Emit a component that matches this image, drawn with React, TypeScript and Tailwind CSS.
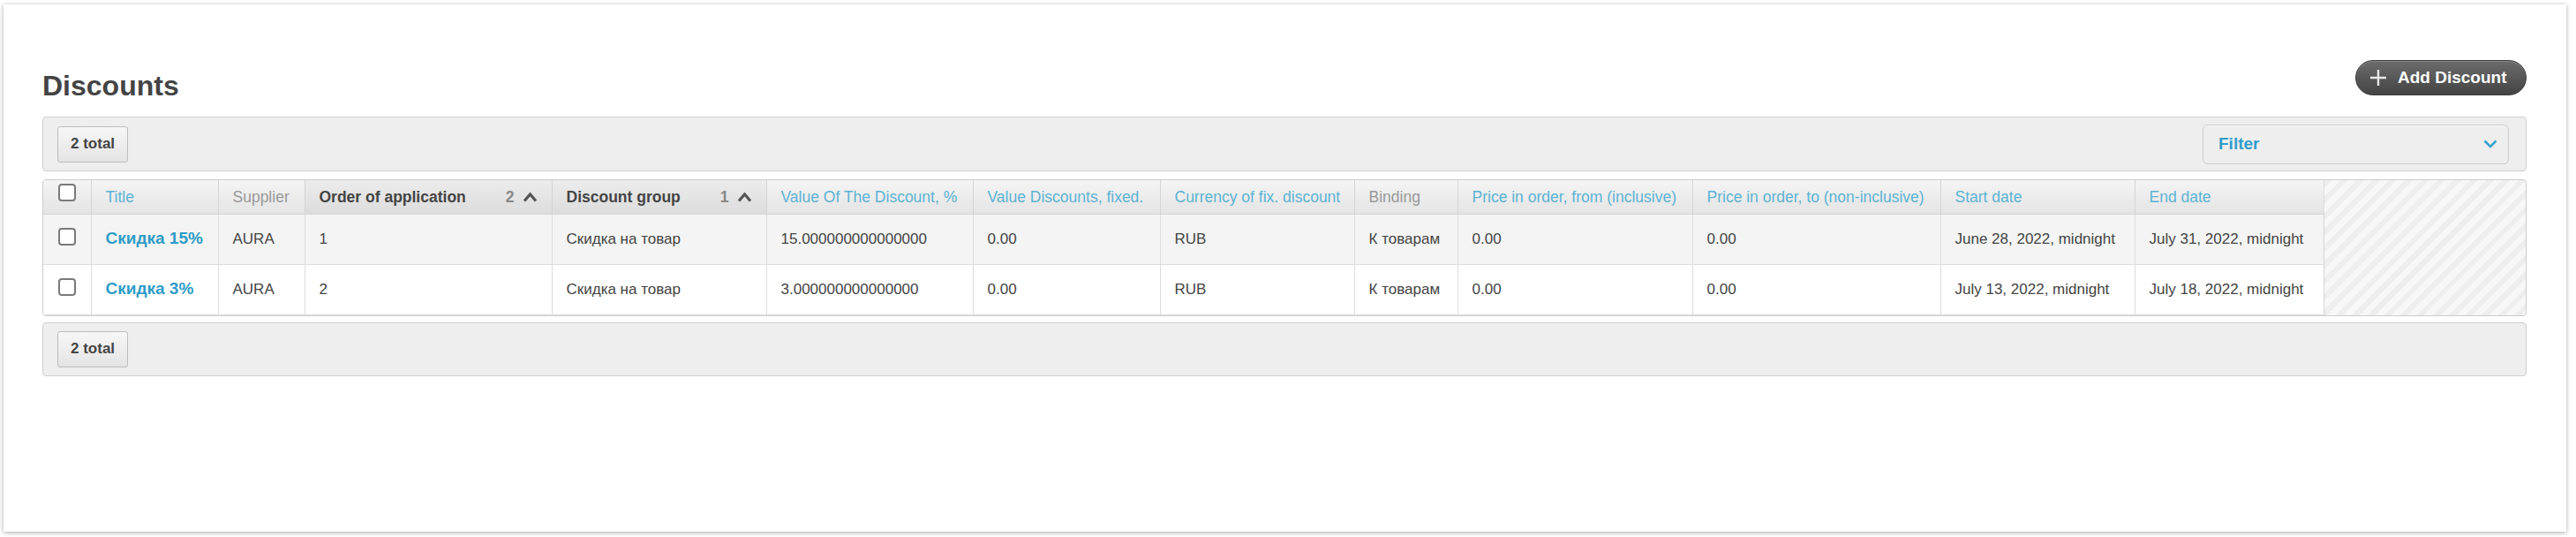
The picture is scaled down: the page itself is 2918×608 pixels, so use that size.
import React from 'react';

type Col = {
  label: string;
  width: string;
  tone: 'link' | 'muted' | 'sorted';
  sort?: string;
};

const columns: Col[] = [
  { label: 'Title', width: 'w-[144px]', tone: 'link' },
  { label: 'Supplier', width: 'w-[98px]', tone: 'muted' },
  { label: 'Order of application', width: 'w-[280px]', tone: 'sorted', sort: '2' },
  { label: 'Discount group', width: 'w-[243px]', tone: 'sorted', sort: '1' },
  { label: 'Value Of The Discount, %', width: 'w-[234px]', tone: 'link' },
  { label: 'Value Discounts, fixed.', width: 'w-[212px]', tone: 'link' },
  { label: 'Currency of fix. discount', width: 'w-[220px]', tone: 'link' },
  { label: 'Binding', width: 'w-[117px]', tone: 'muted' },
  { label: 'Price in order, from (inclusive)', width: 'w-[266px]', tone: 'link' },
  { label: 'Price in order, to (non-inclusive)', width: 'w-[281px]', tone: 'link' },
  { label: 'Start date', width: 'w-[220px]', tone: 'link' },
  { label: 'End date', width: 'w-[214px]', tone: 'link' },
];

const rows = [
  {
    title: 'Скидка 15%',
    cells: ['AURA', '1', 'Скидка на товар', '15.000000000000000', '0.00', 'RUB', 'К товарам', '0.00', '0.00', 'June 28, 2022, midnight', 'July 31, 2022, midnight'],
  },
  {
    title: 'Скидка 3%',
    cells: ['AURA', '2', 'Скидка на товар', '3.000000000000000', '0.00', 'RUB', 'К товарам', '0.00', '0.00', 'July 13, 2022, midnight', 'July 18, 2022, midnight'],
  },
];

const Checkbox = () => (
  <span className="block w-[20px] h-[20px] rounded-[4px] border-2 border-[#7a7a7a] bg-white mx-auto" />
);

const TotalButton = () => (
  <button className="h-[41px] px-[14px] rounded-[3px] border border-[#bdbdbd] bg-gradient-to-b from-[#f7f7f7] to-[#e4e4e4] text-[17px] font-bold text-[#444]">
    2 total
  </button>
);

const SortUp = () => (
  <svg width="17" height="12" viewBox="0 0 17 12" fill="none">
    <path d="M2 10.5 8.5 3 15 10.5" stroke="#555" strokeWidth="3.2" strokeLinejoin="miter" />
  </svg>
);

export default function App() {
  return (
    <div className="w-[2918px] h-[608px] bg-white pl-[4px] pt-[5px] font-['Liberation_Sans',Arial,sans-serif] text-[#444]">
      <div className="w-[2903px] h-[597px] bg-white shadow-[0_1px_5px_rgba(0,0,0,0.35)] pt-[63px] pl-[44px] pr-[45px]">
        <div className="flex items-start justify-between h-[45px]">
          <h1 className="mt-[13px] text-[32px] leading-[32px] font-bold text-[#444]">Discounts</h1>
          <button className="h-[40px] w-[194px] flex items-center pl-[15px] rounded-full border border-[#3a3a3a] bg-gradient-to-b from-[#6c6c6c] to-[#444] text-white text-[19px] font-bold shadow-[inset_0_1px_0_rgba(255,255,255,0.2)]">
            <svg width="20" height="20" viewBox="0 0 20 20" className="mr-[12px]">
              <path d="M10 1v18M1 10h18" stroke="#e8e8e8" strokeWidth="2.4" />
            </svg>
            Add Discount
          </button>
        </div>

        <div className="mt-[19px] h-[62px] rounded-[4px] border border-[#cfcfcf] bg-[#eeeeee] flex items-center justify-between pl-[16px] pr-[19px]">
          <TotalButton />
          <div className="w-[347px] h-[45px] rounded-[6px] border border-[#cccccc] bg-[#eeeeee] shadow-[inset_0_1px_0_#fafafa] flex items-center justify-between pl-[17px] pr-[12px]">
            <span className="text-[19px] font-bold text-[#2f9dc9]">Filter</span>
            <svg width="16" height="10" viewBox="0 0 16 10" fill="none">
              <path d="M1.5 1.5 8 8l6.5-6.5" stroke="#3aa2cc" strokeWidth="2.6" />
            </svg>
          </div>
        </div>

        <div className="mt-[9px] rounded-[4px] border border-[#cccccc] overflow-hidden bg-[repeating-linear-gradient(135deg,#f7f7f7_0px,#f7f7f7_7px,#eeeeee_7px,#eeeeee_13px)]">
          <table className="table-fixed border-collapse text-[17px] w-[2583px]">
            <thead>
              <tr className="h-[38px]">
                <th className="w-[54px] border-b border-r border-[#d4d4d4] bg-gradient-to-b from-[#f4f4f4] to-[#e4e4e4] align-top pt-[4px]">
                  <Checkbox />
                </th>
                {columns.map((c, i) => (
                  <th
                    key={c.label}
                    className={`${c.width} border-b border-[#d4d4d4] ${i === columns.length - 1 ? 'border-r border-r-[#dcdcdc]' : 'border-r'} px-[16px] text-left text-[17.5px] whitespace-nowrap ${
                      c.tone === 'sorted'
                        ? 'bg-gradient-to-b from-[#ececec] to-[#dcdcdc] font-bold text-[#444]'
                        : 'bg-gradient-to-b from-[#f4f4f4] to-[#e4e4e4] font-normal'
                    } ${c.tone === 'link' ? 'text-[#5cb3d4]' : ''} ${c.tone === 'muted' ? 'text-[#999]' : ''}`}
                  >
                    {c.sort ? (
                      <div className="flex items-center justify-between">
                        <span>{c.label}</span>
                        <span className="flex items-center gap-[9px] text-[#888] font-bold">
                          {c.sort}
                          <SortUp />
                        </span>
                      </div>
                    ) : (
                      c.label
                    )}
                  </th>
                ))}
              </tr>
            </thead>
            <tbody>
              {rows.map((r, ri) => (
                <tr key={r.title} className={`h-[57px] ${ri === 0 ? 'bg-[#f4f4f4]' : 'bg-white'}`}>
                  <td className="border-b border-r border-[#dddddd] align-top pt-[15px]">
                    <Checkbox />
                  </td>
                  <td className="border-b border-r border-[#dddddd] px-[16px] whitespace-nowrap font-bold text-[19px] text-[#2e9cc7]">
                    {r.title}
                  </td>
                  {r.cells.map((v, ci) => (
                    <td
                      key={ci}
                      className={`border-b border-r ${ci === r.cells.length - 1 ? 'border-r-[#d4d4d4]' : ''} border-[#dddddd] px-[16px] whitespace-nowrap text-[#444]`}
                    >
                      {v}
                    </td>
                  ))}
                </tr>
              ))}
            </tbody>
          </table>
        </div>

        <div className="mt-[7px] h-[61px] rounded-[4px] border border-[#cfcfcf] bg-[#eeeeee] flex items-center pl-[16px]">
          <TotalButton />
        </div>
      </div>
    </div>
  );
}
